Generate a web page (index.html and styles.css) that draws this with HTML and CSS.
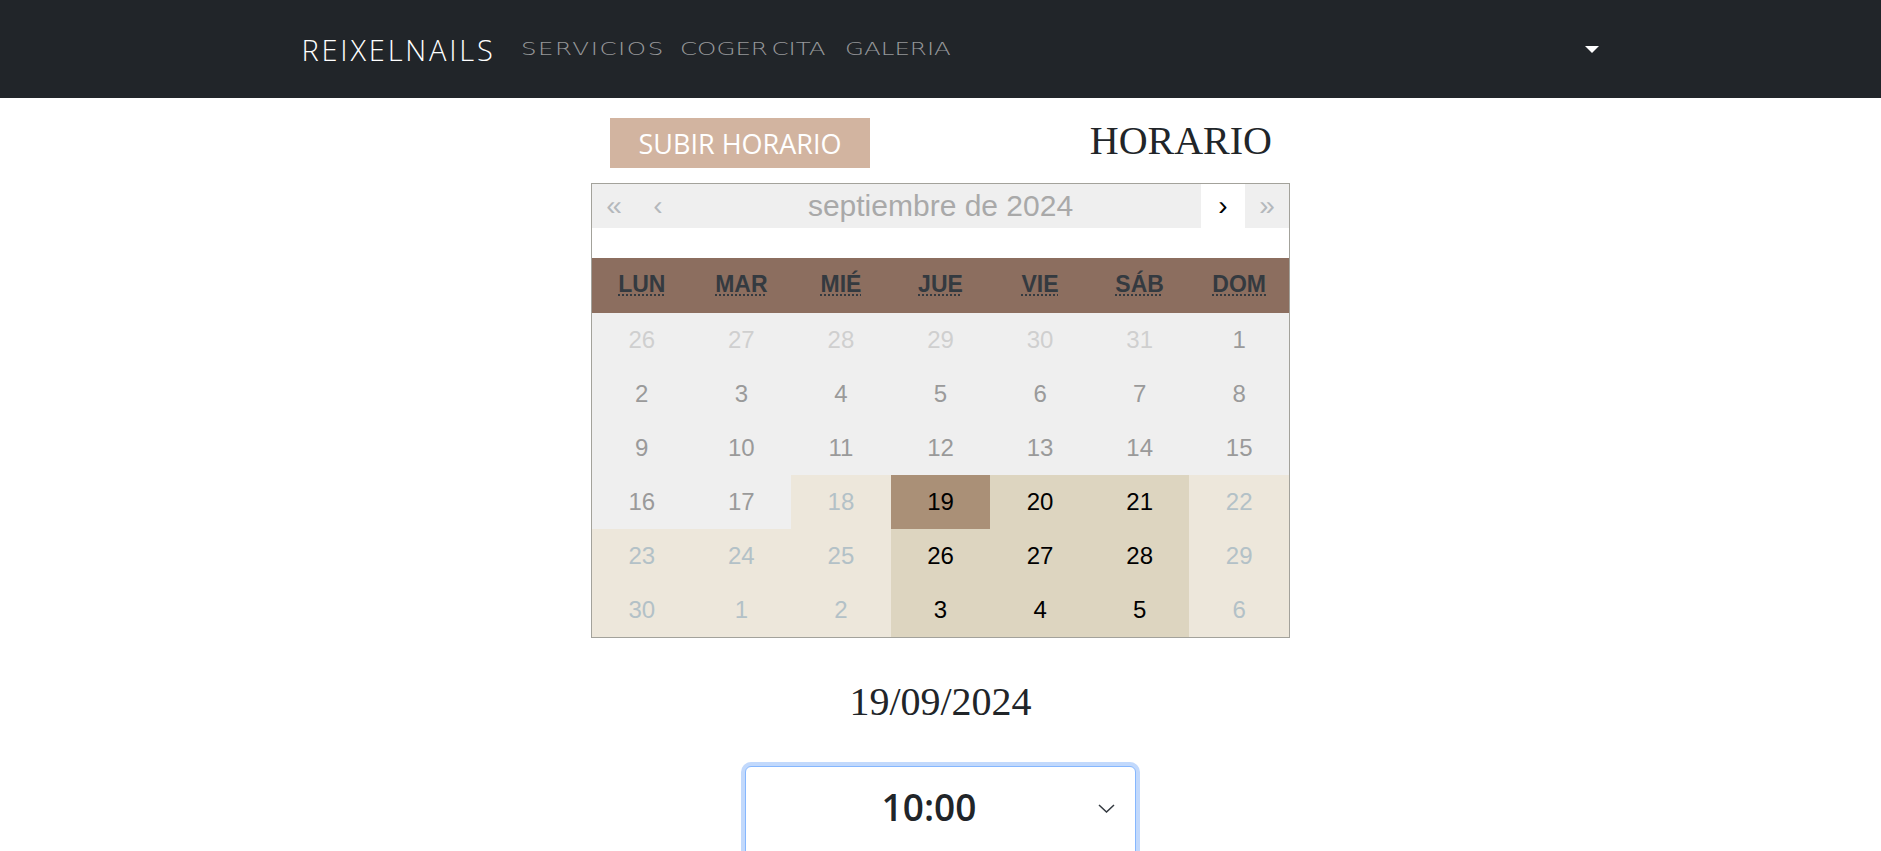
FILE: index.html
```html
<!DOCTYPE html>
<html lang="es">
<head>
<meta charset="utf-8">
<title>ReixelNails - Horario</title>
<link rel="stylesheet" href="styles.css">
</head>
<body>
<nav class="navbar">
  <div class="nav-inner">
    <a class="brand" href="#">REIXELNAILS</a>
    <ul class="nav-links">
      <li><a class="nav-link nav-link-wide" href="#"><span>SERVICIOS</span></a></li>
      <li><a class="nav-link" href="#"><span>COGER CITA</span></a></li>
      <li><a class="nav-link" href="#"><span>GALERIA</span></a></li>
    </ul>
    <button class="dropdown-toggle" aria-label="Menú">
      <svg width="14" height="7" viewBox="0 0 14 7"><polygon points="0,0 14,0 7,7" fill="#fff"/></svg>
    </button>
  </div>
</nav>

<main class="page">
  <div class="top-row">
    <button class="btn-upload">SUBIR HORARIO</button>
    <h1 class="title">HORARIO</h1>
  </div>

  <div class="datepicker">
    <div class="dp-head">
      <span class="dp-nav">«</span>
      <span class="dp-nav">‹</span>
      <span class="dp-switch">septiembre de 2024</span>
      <span class="dp-nav dp-next">›</span>
      <span class="dp-nav">»</span>
    </div>
    <div class="dp-spacer"></div>
    <div class="dp-grid">
      <div class="dow"><abbr title="lunes">LUN</abbr></div>
      <div class="dow"><abbr title="martes">MAR</abbr></div>
      <div class="dow"><abbr title="miércoles">MIÉ</abbr></div>
      <div class="dow"><abbr title="jueves">JUE</abbr></div>
      <div class="dow"><abbr title="viernes">VIE</abbr></div>
      <div class="dow"><abbr title="sábado">SÁB</abbr></div>
      <div class="dow"><abbr title="domingo">DOM</abbr></div>

      <div class="day old">26</div>
      <div class="day old">27</div>
      <div class="day old">28</div>
      <div class="day old">29</div>
      <div class="day old">30</div>
      <div class="day old">31</div>
      <div class="day">1</div>

      <div class="day">2</div>
      <div class="day">3</div>
      <div class="day">4</div>
      <div class="day">5</div>
      <div class="day">6</div>
      <div class="day">7</div>
      <div class="day">8</div>

      <div class="day">9</div>
      <div class="day">10</div>
      <div class="day">11</div>
      <div class="day">12</div>
      <div class="day">13</div>
      <div class="day">14</div>
      <div class="day">15</div>

      <div class="day">16</div>
      <div class="day">17</div>
      <div class="day muted">18</div>
      <div class="day active">19</div>
      <div class="day range">20</div>
      <div class="day range">21</div>
      <div class="day muted">22</div>

      <div class="day muted">23</div>
      <div class="day muted">24</div>
      <div class="day muted">25</div>
      <div class="day range">26</div>
      <div class="day range">27</div>
      <div class="day range">28</div>
      <div class="day muted">29</div>

      <div class="day muted">30</div>
      <div class="day muted">1</div>
      <div class="day muted">2</div>
      <div class="day range">3</div>
      <div class="day range">4</div>
      <div class="day range">5</div>
      <div class="day muted">6</div>
    </div>
  </div>

  <h2 class="date">19/09/2024</h2>

  <div class="time-select">
    <div class="time-row">
      <span class="time-value">10:00</span>
      <svg class="chevron" width="17" height="9" viewBox="0 0 17 9"><path d="M1 1 L8.5 8 L16 1" fill="none" stroke="#343a40" stroke-width="1.5"/></svg>
    </div>
  </div>
</main>
</body>
</html>
```

FILE: styles.css
```css
html, body {
  margin: 0;
  padding: 0;
}

body {
  height: 100vh;
  overflow: hidden;
  background: #fff;
  color: #212529;
  font-family: "Liberation Serif", "Times New Roman", serif;
}

/* ---------- navbar ---------- */
.navbar {
  height: 98px;
  background: #212529;
}

.nav-inner {
  width: 1316px;
  height: 100%;
  margin: 0 auto;
  display: flex;
  align-items: center;
}

.brand {
  padding-left: 19px;
  font-family: "Open Sans", sans-serif;
  font-weight: 300;
  font-size: 29px;
  letter-spacing: 2.8px;
  color: #fff;
  text-decoration: none;
}

.nav-links {
  list-style: none;
  margin: 0 0 0 25px;
  padding: 0;
  display: grid;
  grid-template-columns: 159px 165px auto;
}

.nav-link {
  display: block;
  font-family: "DejaVu Sans", sans-serif;
  font-weight: 200;
  font-size: 17.5px;
  word-spacing: -3px;
  color: rgba(255, 255, 255, 0.55);
  text-decoration: none;
  white-space: nowrap;
}

.nav-link-wide {
  letter-spacing: 1.1px;
}

.nav-link span {
  display: inline-block;
  transform: scaleX(1.4);
  transform-origin: 0 50%;
}

.dropdown-toggle {
  margin-left: auto;
  padding: 0;
  border: 0;
  background: none;
  display: flex;
  align-items: center;
  height: 14px;
}

/* ---------- page ---------- */
.page {
  width: 699px;
  margin: 0 auto;
}

.top-row {
  display: flex;
  justify-content: space-between;
  align-items: flex-start;
  padding-top: 20px;
}

.btn-upload {
  margin-left: 19px;
  width: 260px;
  height: 50px;
  padding: 0;
  border: 0;
  background: #d2b4a0;
  color: #fff;
  font-family: "Open Sans", sans-serif;
  font-size: 27px;
  font-weight: 400;
}

.title {
  margin: 0 18px 0 0;
  font-family: "Liberation Serif", "Times New Roman", serif;
  font-weight: 400;
  font-size: 40px;
  line-height: 46px;
  color: #212529;
}

/* ---------- datepicker ---------- */
.datepicker {
  margin-top: 15px;
  box-sizing: border-box;
  width: 699px;
  border: 1px solid #a3a29b;
  font-family: "Liberation Sans", Arial, sans-serif;
}

.dp-head {
  display: flex;
  height: 44px;
  background: #efefef;
}

.dp-nav {
  width: 44px;
  text-align: center;
  line-height: 44px;
  font-size: 28px;
  color: #b4b8bc;
}

.dp-next {
  background: #fff;
  color: #000;
}

.dp-switch {
  flex: 1;
  text-align: center;
  line-height: 44px;
  font-size: 30px;
  color: #a9a9a9;
}

.dp-spacer {
  height: 30px;
}

.dp-grid {
  display: grid;
  grid-template-columns: repeat(7, 1fr);
  grid-template-rows: 55px repeat(6, 54px);
}

.dow {
  display: flex;
  align-items: center;
  justify-content: center;
  padding-bottom: 3px;
  box-sizing: border-box;
  background: #8c6e5f;
  font-weight: 700;
  font-size: 23px;
  color: #343a40;
}

.dow abbr {
  text-decoration: underline dotted;
  text-underline-offset: 3px;
  text-decoration-thickness: 2px;
  cursor: help;
}

.day {
  display: flex;
  align-items: center;
  justify-content: center;
  background: #efefef;
  color: #9a9a9a;
  font-size: 24px;
}

.day.old {
  color: #cfcfcf;
}

.day.muted {
  background: #ede7db;
  color: #b3c1c7;
}

.day.range {
  background: #ddd5c0;
  color: #000;
}

.day.active {
  background: #aa9077;
  color: #000;
}

/* ---------- selected date ---------- */
.date {
  margin: 41px 0 0;
  text-align: center;
  font-family: "Liberation Serif", "Times New Roman", serif;
  font-weight: 400;
  font-size: 40px;
  line-height: 46px;
  color: #212529;
}

.time-select {
  box-sizing: border-box;
  width: 391px;
  height: 110px;
  margin: 41px auto 0;
  border: 1px solid #86b7fe;
  border-radius: 6px;
  box-shadow: 0 0 0 4px #c2d9fc;
  background: #fff;
}

.time-row {
  display: flex;
  align-items: center;
  height: 78px;
  padding-left: 14px;
}

.time-value {
  flex: 1;
  text-align: center;
  font-family: "Open Sans", sans-serif;
  font-weight: 600;
  font-size: 37px;
  color: #212529;
}

.chevron {
  margin: 4px 20px 0 0;
}
```
